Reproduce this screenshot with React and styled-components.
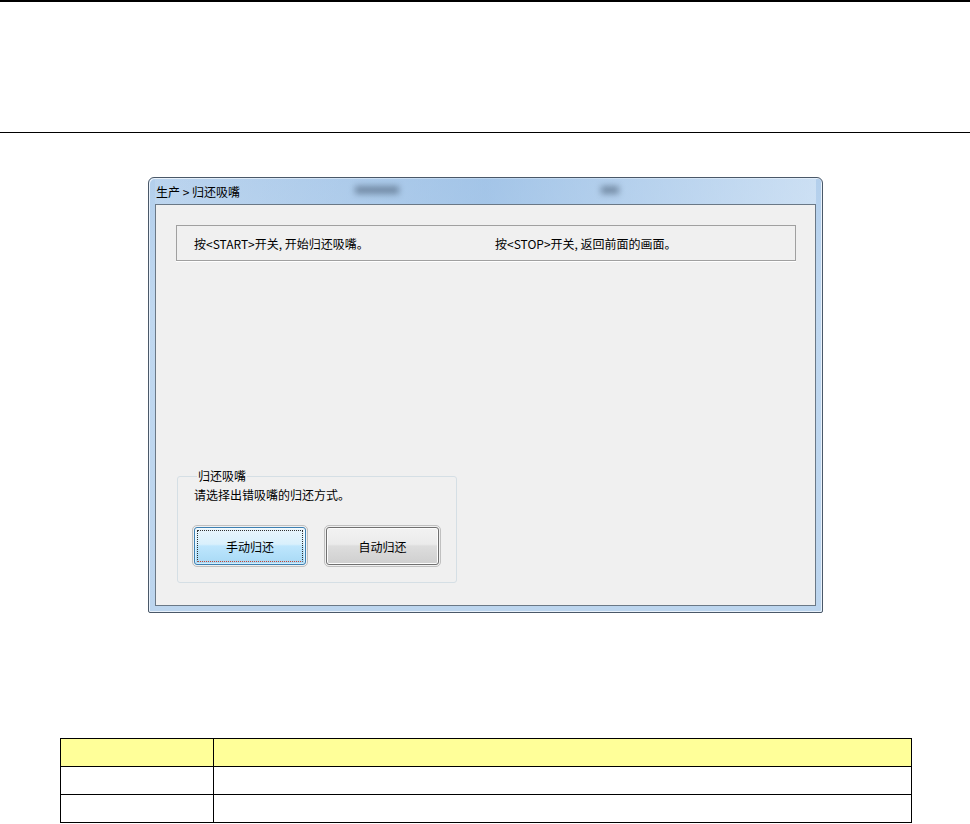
import React from "react";
import styled, { createGlobalStyle } from "styled-components";

const GlobalStyle = createGlobalStyle`
  html, body {
    margin: 0;
    padding: 0;
    background: #ffffff;
  }
  body {
    font-family: "Liberation Sans", "Noto Sans CJK SC", sans-serif;
  }
`;

const Page = styled.div`
  width: 970px;
  height: 824px;
  overflow: hidden;
  display: flex;
  flex-direction: column;
`;

const HeaderBand = styled.div`
  height: 130px;
  border-top: 2px solid #000000;
  border-bottom: 1px solid #000000;
`;

const WindowRow = styled.div`
  padding: 44px 0 0 148px;
`;

const Window = styled.div`
  width: 675px;
  height: 436px;
  box-sizing: border-box;
  border: 1px solid #4a5868;
  border-radius: 6px 6px 2px 2px;
  background: linear-gradient(180deg, #b3cfec 0%, #c0d8f0 30%, #bcd5ee 100%);
  display: flex;
  flex-direction: column;
  padding: 0 6px 6px 6px;
  box-shadow: inset 1px 1px 0 #e8f1fb, inset -1px -1px 0 #e8f1fb;
`;

const TitleBar = styled.div`
  height: 26px;
  display: flex;
  align-items: center;
  position: relative;
  font-family: "Noto Sans CJK SC", sans-serif;
  font-size: 12px;
  color: #000000;
  padding-left: 1px;
  background: linear-gradient(90deg, rgba(255,255,255,0.1) 0%, rgba(150,188,228,0.55) 50%, rgba(220,234,248,0.6) 100%);
`;

const Blur = styled.span`
  position: absolute;
  top: 8px;
  left: ${(p) => p.$left}px;
  width: ${(p) => p.$w}px;
  height: 8px;
  background: #4a5f76;
  filter: blur(3px);
  opacity: 0.6;
`;

const Client = styled.div`
  flex: 1;
  border: 1px solid #6a7886;
  background: #f0f0f0;
  padding: 20px 19px 0 20px;
  display: flex;
  flex-direction: column;
  font-family: "Noto Sans CJK SC", sans-serif;
  font-size: 12px;
  color: #000000;
`;

const InfoBox = styled.div`
  height: 34px;
  border: 1px solid #a0a0a0;
  box-shadow: 0 1px 0 #ffffff;
  display: flex;
  align-items: center;
  padding-left: 17px;
`;

const InfoText = styled.span`
  width: ${(p) => p.$w}px;
  white-space: nowrap;
`;

const Group = styled.fieldset`
  margin: 208px 0 0 1px;
  width: 280px;
  height: 114px;
  box-sizing: border-box;
  border: 1px solid #d5dfe5;
  border-radius: 3px;
  padding: 0 0 0 16px;
  display: flex;
  flex-direction: column;
`;

const Legend = styled.legend`
  padding: 0 1px;
  margin-left: 3px;
  line-height: 14px;
`;

const Hint = styled.div`
  margin-top: 5px;
  line-height: 14px;
`;

const ButtonRow = styled.div`
  display: flex;
  gap: 20px;
  margin-top: 25px;
`;

const Button = styled.button`
  width: ${(p) => p.$w}px;
  height: 38px;
  box-sizing: border-box;
  font-family: "Noto Sans CJK SC", sans-serif;
  font-size: 12px;
  color: #000000;
  border-radius: 3px;
  border: 1px solid ${(p) => (p.$active ? "#3c7fb1" : "#707070")};
  outline: 1px solid #c0c0c0;
  outline-offset: 1px;
  padding: 0;
  position: relative;
  background: ${(p) =>
    p.$active
      ? "linear-gradient(180deg, #eaf6fd 0%, #d9f0fc 45%, #bee6fd 50%, #a7d9f5 100%)"
      : "linear-gradient(180deg, #f2f2f2 0%, #ebebeb 45%, #dddddd 50%, #cfcfcf 100%)"};
  box-shadow: inset 0 0 0 1px ${(p) => (p.$active ? "rgba(255,255,255,0.5)" : "#fcfcfc")};

  &::after {
    content: "";
    display: ${(p) => (p.$active ? "block" : "none")};
    position: absolute;
    inset: 2px;
    border: 1px dotted #303030;
    border-bottom-color: #c84030;
  }
`;

const Table = styled.table`
  margin: 125px 0 0 60px;
  width: 852px;
  border-collapse: collapse;

  td {
    border: 1px solid #000000;
    height: 27px;
    padding: 0;
  }
  td:first-child {
    width: 152px;
  }
  tr:first-child td {
    background: #ffff99;
  }
`;

export default function App() {
  return (
    <Page>
      <GlobalStyle />
      <HeaderBand />
      <WindowRow>
        <Window>
          <TitleBar>
            生产 &gt; 归还吸嘴
            <Blur $left={200} $w={44} />
            <Blur $left={446} $w={18} />
          </TitleBar>
          <Client>
            <InfoBox>
              <InfoText $w={301}>按&lt;START&gt;开关, 开始归还吸嘴。</InfoText>
              <InfoText $w={280}>按&lt;STOP&gt;开关, 返回前面的画面。</InfoText>
            </InfoBox>
            <Group>
              <Legend>归还吸嘴</Legend>
              <Hint>请选择出错吸嘴的归还方式。</Hint>
              <ButtonRow>
                <Button $w={112} $active>手动归还</Button>
                <Button $w={113}>自动归还</Button>
              </ButtonRow>
            </Group>
          </Client>
        </Window>
      </WindowRow>
      <Table>
        <tbody>
          <tr><td></td><td></td></tr>
          <tr><td></td><td></td></tr>
          <tr><td></td><td></td></tr>
        </tbody>
      </Table>
    </Page>
  );
}
